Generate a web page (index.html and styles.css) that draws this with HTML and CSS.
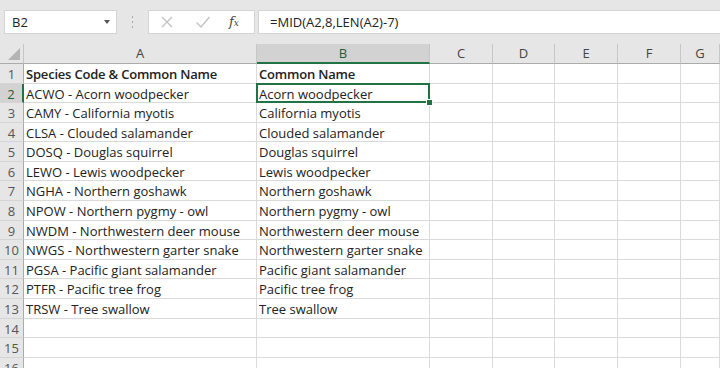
FILE: index.html
```html
<!DOCTYPE html>
<html>
<head>
    <title>Species Codes - Excel</title>
    <link rel="stylesheet" href="styles.css">
</head>
<body>
    <div class="formula-bar">
        <div class="name-box">
            <span>B2</span>
            <span class="drop"></span>
        </div>
        <div class="grip">
            <svg width="3" height="12" viewBox="0 0 3 12"><rect x="1" y="0" width="1" height="2" fill="#a6a6a6"/><rect x="1" y="5" width="1" height="2" fill="#a6a6a6"/><rect x="1" y="10" width="1" height="2" fill="#a6a6a6"/></svg>
        </div>
        <div class="fx-box">
            <svg class="ico" width="14" height="14" viewBox="0 0 14 14"><path d="M2 2 L12 12 M12 2 L2 12" stroke="#c2c2c2" stroke-width="1.4" fill="none"/></svg>
            <svg class="ico" width="16" height="14" viewBox="0 0 16 14"><path d="M1.5 7.5 L6 12 L14.5 2" stroke="#c2c2c2" stroke-width="1.4" fill="none"/></svg>
            <span class="fx">f<sub>x</sub></span>
        </div>
        <div class="formula">=MID(A2,8,LEN(A2)-7)</div>
    </div>

    <div class="sheet">
        <div class="corner"></div>
        <div class="col-head">A</div>
        <div class="col-head active">B</div>
        <div class="col-head">C</div>
        <div class="col-head">D</div>
        <div class="col-head">E</div>
        <div class="col-head">F</div>
        <div class="col-head">G</div>

        <div class="row-head">1</div>
        <div class="cell bold">Species Code &amp; Common Name</div>
        <div class="cell bold">Common Name</div>
        <div class="cell"></div><div class="cell"></div><div class="cell"></div><div class="cell"></div><div class="cell"></div>

        <div class="row-head active">2</div>
        <div class="cell">ACWO - Acorn woodpecker</div>
        <div class="cell selected">Acorn woodpecker</div>
        <div class="cell"></div><div class="cell"></div><div class="cell"></div><div class="cell"></div><div class="cell"></div>

        <div class="row-head">3</div>
        <div class="cell">CAMY - California myotis</div>
        <div class="cell">California myotis</div>
        <div class="cell"></div><div class="cell"></div><div class="cell"></div><div class="cell"></div><div class="cell"></div>

        <div class="row-head">4</div>
        <div class="cell">CLSA - Clouded salamander</div>
        <div class="cell">Clouded salamander</div>
        <div class="cell"></div><div class="cell"></div><div class="cell"></div><div class="cell"></div><div class="cell"></div>

        <div class="row-head">5</div>
        <div class="cell">DOSQ - Douglas squirrel</div>
        <div class="cell">Douglas squirrel</div>
        <div class="cell"></div><div class="cell"></div><div class="cell"></div><div class="cell"></div><div class="cell"></div>

        <div class="row-head">6</div>
        <div class="cell">LEWO - Lewis woodpecker</div>
        <div class="cell">Lewis woodpecker</div>
        <div class="cell"></div><div class="cell"></div><div class="cell"></div><div class="cell"></div><div class="cell"></div>

        <div class="row-head">7</div>
        <div class="cell">NGHA - Northern goshawk</div>
        <div class="cell">Northern goshawk</div>
        <div class="cell"></div><div class="cell"></div><div class="cell"></div><div class="cell"></div><div class="cell"></div>

        <div class="row-head">8</div>
        <div class="cell">NPOW - Northern pygmy - owl</div>
        <div class="cell">Northern pygmy - owl</div>
        <div class="cell"></div><div class="cell"></div><div class="cell"></div><div class="cell"></div><div class="cell"></div>

        <div class="row-head">9</div>
        <div class="cell">NWDM - Northwestern deer mouse</div>
        <div class="cell">Northwestern deer mouse</div>
        <div class="cell"></div><div class="cell"></div><div class="cell"></div><div class="cell"></div><div class="cell"></div>

        <div class="row-head">10</div>
        <div class="cell">NWGS - Northwestern garter snake</div>
        <div class="cell">Northwestern garter snake</div>
        <div class="cell"></div><div class="cell"></div><div class="cell"></div><div class="cell"></div><div class="cell"></div>

        <div class="row-head">11</div>
        <div class="cell">PGSA - Pacific giant salamander</div>
        <div class="cell">Pacific giant salamander</div>
        <div class="cell"></div><div class="cell"></div><div class="cell"></div><div class="cell"></div><div class="cell"></div>

        <div class="row-head">12</div>
        <div class="cell">PTFR - Pacific tree frog</div>
        <div class="cell">Pacific tree frog</div>
        <div class="cell"></div><div class="cell"></div><div class="cell"></div><div class="cell"></div><div class="cell"></div>

        <div class="row-head">13</div>
        <div class="cell">TRSW - Tree swallow</div>
        <div class="cell">Tree swallow</div>
        <div class="cell"></div><div class="cell"></div><div class="cell"></div><div class="cell"></div><div class="cell"></div>

        <div class="row-head">14</div>
        <div class="cell"></div><div class="cell"></div><div class="cell"></div><div class="cell"></div><div class="cell"></div><div class="cell"></div><div class="cell"></div>

        <div class="row-head">15</div>
        <div class="cell"></div><div class="cell"></div><div class="cell"></div><div class="cell"></div><div class="cell"></div><div class="cell"></div><div class="cell"></div>

        <div class="row-head">16</div>
        <div class="cell"></div><div class="cell"></div><div class="cell"></div><div class="cell"></div><div class="cell"></div><div class="cell"></div><div class="cell"></div>
    </div>
</body>
</html>
```

FILE: styles.css
```css
body {
    margin: 0;
    padding: 0;
    width: 720px;
    height: 368px;
    overflow: hidden;
    background-color: #fff;
    font-family: 'Open Sans', sans-serif;
}

/* formula bar */
.formula-bar {
    display: flex;
    align-items: center;
    height: 44px;
    padding: 0 0 0 4px;
    background-color: #e6e6e6;
    box-sizing: border-box;
}

.name-box,
.fx-box,
.formula {
    height: 24px;
    background-color: #fff;
    border: 1px solid #d4d4d4;
    box-sizing: border-box;
    margin-top: -1px;
}

.name-box {
    width: 113px;
    display: flex;
    align-items: center;
    justify-content: space-between;
    padding: 0 6px 0 7px;
    font-size: 13px;
    color: #222;
}

.drop {
    width: 0;
    height: 0;
    border-left: 3.5px solid transparent;
    border-right: 3.5px solid transparent;
    border-top: 4px solid #555;
}

.grip {
    width: 31px;
    display: flex;
    justify-content: center;
}

.fx-box {
    width: 107px;
    display: flex;
    align-items: center;
    padding-left: 11px;
    gap: 22px;
}

.fx-box .ico:nth-child(2) {
    margin-left: -1px;
}

.fx {
    font-family: 'DejaVu Serif', serif;
    font-style: italic;
    font-size: 13px;
    color: #444;
    margin-left: -4px;
    line-height: 1;
}

.fx sub {
    font-size: 9px;
    vertical-align: 0;
}

.formula {
    flex: 1;
    margin-left: 3px;
    border-right: none;
    padding-left: 11px;
    font-size: 13px;
    line-height: 22px;
    color: #222;
}

/* sheet grid */
.sheet {
    display: grid;
    grid-template-columns: 24px 233px 173px 63px 62px 63px 63px 39px;
    grid-template-rows: 20px;
    grid-auto-rows: 19.58px;
}

.corner,
.col-head,
.row-head {
    background-color: #e6e6e6;
    color: #444;
    font-size: 13px;
    box-sizing: border-box;
}

.corner {
    position: relative;
    border-right: 1px solid #c6c6c6;
    border-bottom: 1px solid #ababab;
}

.corner::after {
    content: "";
    position: absolute;
    right: 3px;
    bottom: 3px;
    width: 0;
    height: 0;
    border-left: 12px solid transparent;
    border-bottom: 12px solid #b4b4b4;
}

.col-head {
    text-align: center;
    line-height: 19px;
    border-right: 1px solid #c6c6c6;
    border-bottom: 1px solid #ababab;
}

.col-head.active {
    background-color: #d2d2d2;
    color: #1f5e3a;
    border-bottom: 2px solid #217346;
}

.row-head {
    text-align: center;
    line-height: 20px;
    border-right: 1px solid #ababab;
    border-bottom: 1px solid #d4d4d4;
    color: #555;
}

.row-head.active {
    background-color: #d2d2d2;
    color: #1f5e3a;
    border-right: 2px solid #217346;
}

.cell {
    box-sizing: border-box;
    border-right: 1px solid #dadada;
    border-bottom: 1px solid #dadada;
    padding: 0 0 0 2px;
    font-size: 13px;
    line-height: 20px;
    color: #222;
    white-space: nowrap;
    overflow: visible;
}

.cell.bold {
    font-weight: 600;
    letter-spacing: -0.2px;
}

.cell.selected {
    position: relative;
}

.cell.selected::before {
    content: "";
    position: absolute;
    left: -1px;
    top: -1px;
    right: -1px;
    bottom: -1px;
    border: 2px solid #217346;
}

.cell.selected::after {
    content: "";
    position: absolute;
    right: -4px;
    bottom: -4px;
    width: 5px;
    height: 5px;
    background-color: #217346;
    border: 1px solid #fff;
}
```
